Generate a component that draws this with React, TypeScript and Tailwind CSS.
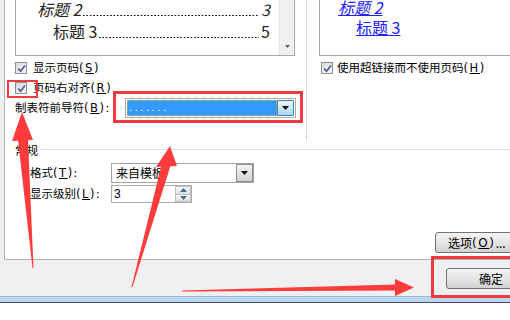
import React from "react";

function Check() {
  return (
    <span className="w-[12px] h-[12px] shrink-0 border border-[#8e8f8f] bg-gradient-to-br from-[#d8d8d8] to-[#fafafa] flex items-center justify-center">
      <svg width="9" height="9" viewBox="0 0 9 9">
        <path d="M1.2 4.6 L3.6 7.2 L8 1.4" fill="none" stroke="#4a60a6" strokeWidth="1.7" />
      </svg>
    </span>
  );
}

function Tri() {
  return (
    <svg width="7" height="4" viewBox="0 0 7 4">
      <path d="M0 0h7L3.5 4z" fill="#111" />
    </svg>
  );
}

// mnemonic in parentheses, e.g. (S)
function Mn({ k }: { k: string }) {
  return (
    <span className="font-['DejaVu_Sans',sans-serif] tracking-[1.6px]">
      (<span className="underline underline-offset-1">{k}</span>)
    </span>
  );
}

// dotted tab leader, sits on the text baseline
function Leader() {
  return (
    <span className="flex-1 min-w-0 mx-[2px] h-[1.5px] bg-[linear-gradient(to_right,#111_1.5px,transparent_1.5px)] bg-[length:3.4px_1.5px] bg-repeat-x" />
  );
}

export default function App() {
  return (
    <div className="relative w-[510px] h-[320px] overflow-hidden bg-white text-[11.5px] text-black leading-none font-['Noto_Sans_CJK_SC',sans-serif]">
      <div className="h-[296px] bg-[#f0f0f0] flex flex-col">
        {/* tab page */}
        <div className="ml-[4px] w-[530px] h-[260px] shrink-0 bg-white border-l border-b border-[#b3b3b3] flex flex-col">
          <div className="flex h-[141px] shrink-0">
            {/* print preview */}
            <div className="w-[302px] shrink-0 border-r border-[#d6d6d6] pl-[10px]">
              <div className="w-[280px] h-[56px] border border-t-0 border-[#a7a7a7] flex">
                <div className="flex-1 min-w-0 flex flex-col pr-[9px]">
                  <div className="h-[18px] flex items-center">
                    <div className="w-full min-w-0 flex items-baseline pl-[21px] text-[16px] italic text-[#222]">
                      <span className="whitespace-nowrap">标题 2</span>
                      <Leader />
                      <span>3</span>
                    </div>
                  </div>
                  <div className="h-[26px] flex items-center">
                    <div className="w-full min-w-0 flex items-baseline pl-[37px] text-[16px] text-[#222]">
                      <span className="whitespace-nowrap">标题 3</span>
                      <Leader />
                      <span>5</span>
                    </div>
                  </div>
                </div>
                <div className="w-[15px] shrink-0 bg-[#f0f0f0] border-l border-[#e4e4e4] flex flex-col justify-end items-center pb-[7px]">
                  <svg width="5" height="3" viewBox="0 0 5 3">
                    <path d="M0 0h5L2.5 3z" fill="#606060" />
                  </svg>
                </div>
              </div>
              <div className="mt-[2px] flex flex-col">
                <div className="h-[20px] flex items-center gap-[6px]">
                  <Check />
                  <span>显示页码<Mn k="S" /></span>
                </div>
                <div className="h-[20px] flex items-center gap-[6px]">
                  <Check />
                  <span>页码右对齐<Mn k="R" /></span>
                </div>
                <div className="h-[20px] flex items-center">
                  <span className="w-[110px] shrink-0 whitespace-nowrap">制表符前导符<Mn k="B" />:</span>
                  <div className="w-[171px] h-[20px] border border-[#a9a9a9] bg-white flex p-px">
                    <div className="flex-1 bg-[#3399ff] border border-dotted border-[#d9a46a] text-white flex items-end pl-[1px] pb-[2px] font-['Liberation_Sans'] text-[11px] tracking-[2.6px]">
                      .......
                    </div>
                    <div className="w-[17px] border border-[#3c7fb1] rounded-[1px] bg-gradient-to-b from-[#eaf6fd] to-[#a9d8f4] flex items-center justify-center">
                      <Tri />
                    </div>
                  </div>
                </div>
              </div>
            </div>
            {/* web preview */}
            <div className="flex-1 min-w-0 pl-[12px]">
              <div className="h-[56px] border-l border-b border-[#a7a7a7] flex flex-col text-[16px] text-[#2020ff]">
                <div className="h-[14px] flex items-center pl-[18px]">
                  <span className="italic underline whitespace-nowrap">标题 2</span>
                </div>
                <div className="h-[26px] flex items-center pl-[36px]">
                  <span className="underline whitespace-nowrap">标题 3</span>
                </div>
              </div>
              <div className="mt-[2px] h-[20px] flex items-center gap-[4px] pl-[2px]">
                <Check />
                <span className="whitespace-nowrap">使用超链接而不使用页码<Mn k="H" /></span>
              </div>
            </div>
          </div>

          {/* 常规 */}
          <div className="pl-[10px] h-[20px] flex items-center">
            <span>常规</span>
            <div className="flex-1 h-px bg-[#d5dfe5] ml-[3px] self-start mt-[8px]" />
          </div>
          <div className="pl-[25px] mt-[2px] h-[20px] flex items-center">
            <span className="w-[81px] shrink-0 whitespace-nowrap">格式<Mn k="T" />:</span>
            <div className="w-[143px] h-[20px] border border-[#a5a5a5] bg-white flex">
              <span className="flex-1 flex items-center pl-[4px] text-[12px]">来自模板</span>
              <div className="w-[17px] border border-[#8c8c8c] bg-gradient-to-b from-[#f4f4f4] to-[#d4d4d4] flex items-center justify-center">
                <Tri />
              </div>
            </div>
          </div>
          <div className="pl-[25px] mt-[2px] h-[18px] flex items-center">
            <span className="w-[81px] shrink-0 whitespace-nowrap">显示级别<Mn k="L" />:</span>
            <div className="w-[81px] h-[18px] border border-[#abadb3] bg-white flex">
              <span className="flex-1 flex items-center pl-[2px] text-[12px] font-['Liberation_Sans']">3</span>
              <div className="w-[16px] flex flex-col">
                <div className="flex-1 border border-[#c2c2c2] bg-gradient-to-b from-[#f6f6f6] to-[#e0e0e0] flex items-center justify-center">
                  <svg width="7" height="4" viewBox="0 0 7 4">
                    <path d="M0 4h7L3.5 0z" fill="#4e6a93" />
                  </svg>
                </div>
                <div className="flex-1 border border-t-0 border-[#c2c2c2] bg-gradient-to-b from-[#f6f6f6] to-[#e0e0e0] flex items-center justify-center">
                  <svg width="7" height="4" viewBox="0 0 7 4">
                    <path d="M0 0h7L3.5 4z" fill="#4e6a93" />
                  </svg>
                </div>
              </div>
            </div>
          </div>
          <div className="mt-[29px] ml-[430px] w-[90px] h-[21px] border border-[#707070] rounded-[3px] bg-gradient-to-b from-[#f3f3f3] via-[#e6e6e6] to-[#d2d2d2] flex items-center pl-[12px] text-[12px] whitespace-nowrap">
            选项<Mn k="O" />...
          </div>
        </div>

        {/* dialog buttons */}
        <div className="pt-[8px] pl-[446px]">
          <div className="w-[90px] h-[21px] border border-[#707070] rounded-[3px] bg-gradient-to-b from-[#f3f3f3] via-[#e6e6e6] to-[#d2d2d2] flex items-center justify-center text-[12px]">
            确定
          </div>
        </div>
      </div>
      <div className="h-[6px] bg-[#b6d6f4] border-t border-[#a3b6c9]" />
      <div className="h-px bg-[#4a4a4a]" />

      {/* red annotations */}
      <svg className="absolute inset-0 pointer-events-none" width="510" height="320" viewBox="0 0 510 320">
        <g fill="none" stroke="#f03a3e">
          <rect x="8" y="81" width="29" height="16" strokeWidth="2" />
          <rect x="114.5" y="92.5" width="187" height="29" strokeWidth="3" />
          <rect x="432.5" y="257.5" width="90" height="39" strokeWidth="3" />
        </g>
        <g fill="#ff3b3b">
          <polygon points="32.5,268 33.5,268 28,140 18,140" />
          <polygon points="22,112 33,140 12,141" />
          <polygon points="131.5,287 132.5,287 171,164 162,163" />
          <polygon points="170,146 156,167 177,166" />
          <polygon points="182,290.5 182,291.5 396,290.5 396,284.5" />
          <polygon points="414,287.5 395,279 395,296" />
        </g>
      </svg>
    </div>
  );
}
